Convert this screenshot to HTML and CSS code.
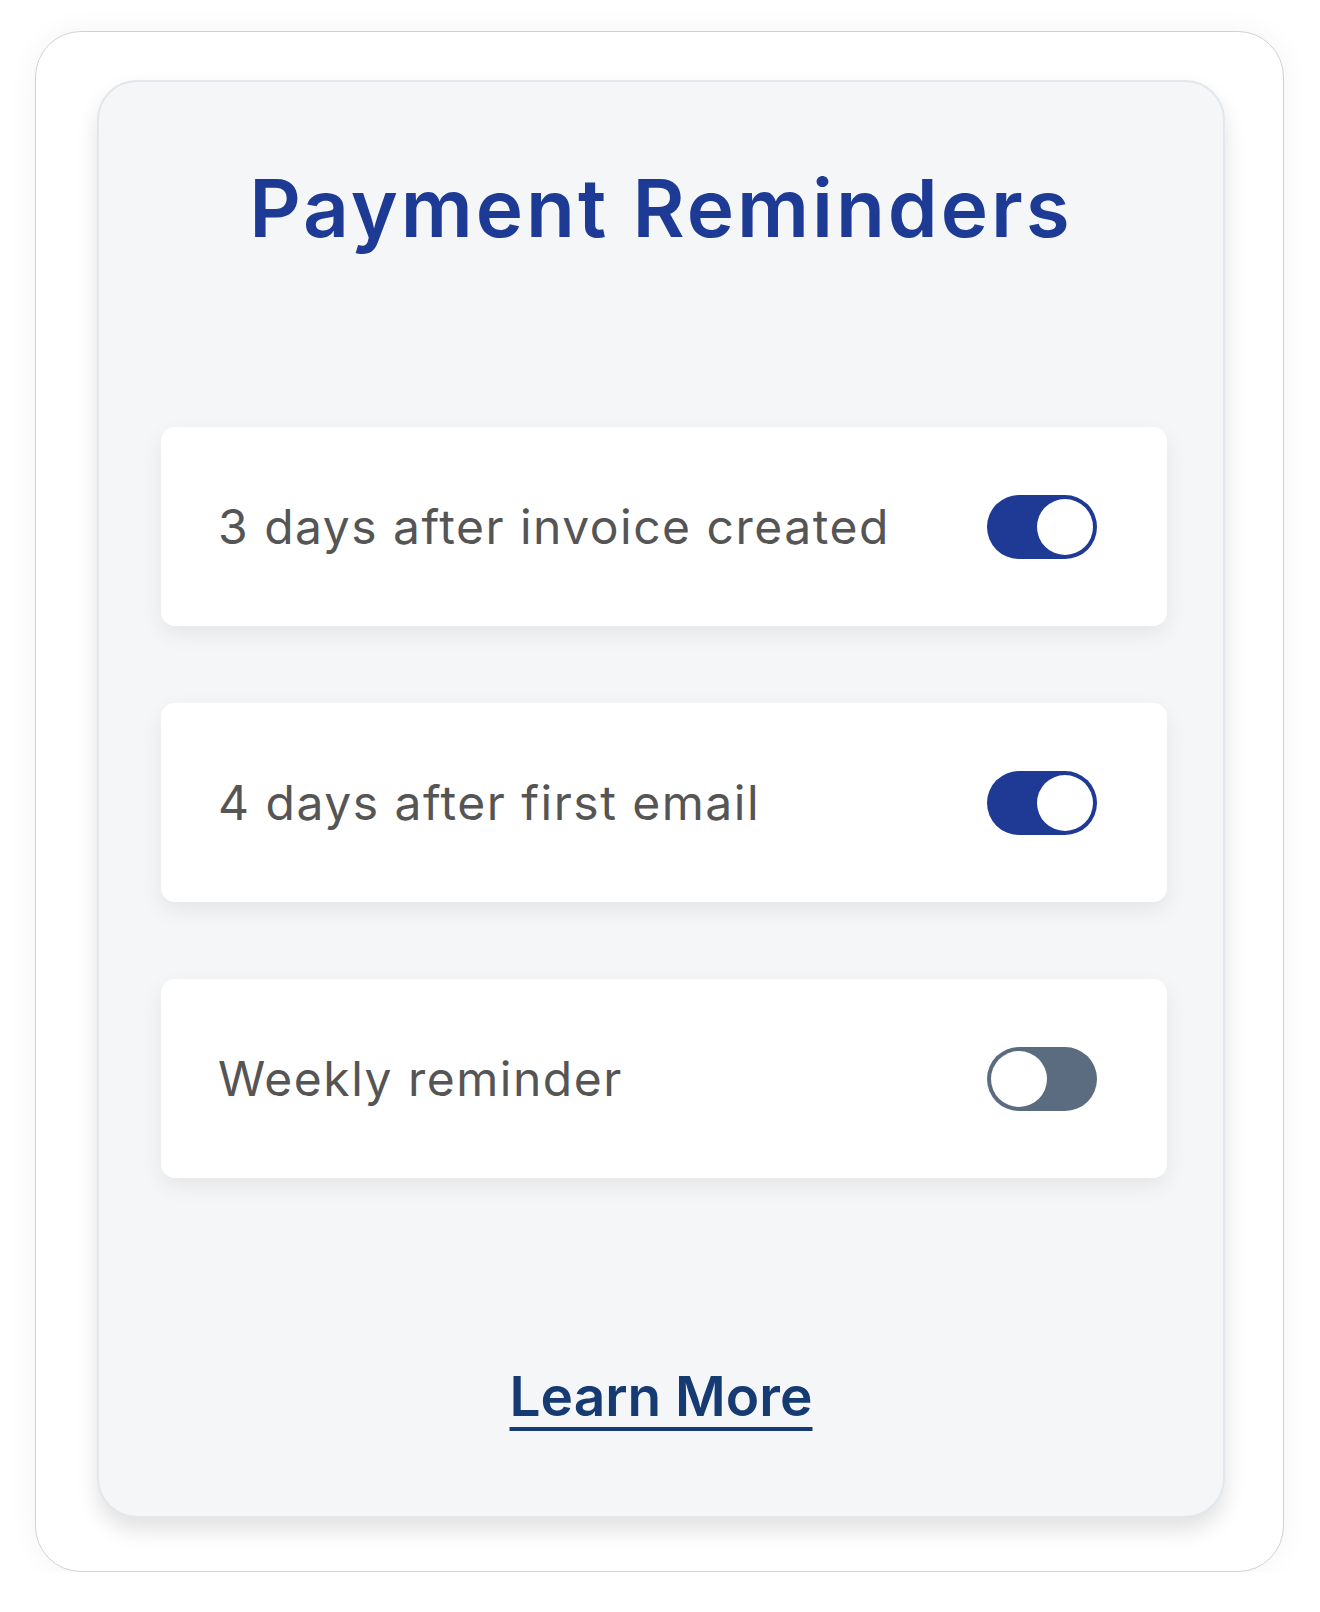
FILE: index.html
```html
<!DOCTYPE html>
<html lang="en">
<head>
    <meta charset="UTF-8">
    <meta name="viewport" content="width=device-width, initial-scale=1.0">
    <title>Payment Reminders</title>
    <link rel="stylesheet" href="styles.css">
</head>
<body>
    <div class="frame">
        <div class="card">
            <h1 class="card-title">Payment Reminders</h1>

            <!-- Reminder rows -->
            <div class="reminder-list">
                <div class="reminder">
                    <span class="reminder-label">3 days after invoice created</span>
                    <div class="toggle on"><div class="knob"></div></div>
                </div>
                <div class="reminder">
                    <span class="reminder-label">4 days after first email</span>
                    <div class="toggle on"><div class="knob"></div></div>
                </div>
                <div class="reminder">
                    <span class="reminder-label">Weekly reminder</span>
                    <div class="toggle off"><div class="knob"></div></div>
                </div>
            </div>

            <a class="learn-more" href="#">Learn More</a>
        </div>
    </div>
</body>
</html>
```

FILE: styles.css
```css
body {
    margin: 0;
    font-family: Inter, "Open Sans", sans-serif;
    background-color: #fff;
}

/* Outer frame */
.frame {
    margin: 31px 0 0 35px;
    width: 1249px;
    height: 1541px;
    box-sizing: border-box;
    border: 1px solid #d2d2d2;
    border-radius: 46px;
    background-color: #fff;
    box-shadow: 0 0 30px rgba(0, 0, 0, 0.05);
    padding: 48px 58px 0 61px;
}

/* Card */
.card {
    height: 1438px;
    box-sizing: border-box;
    background-color: #f5f6f8;
    border: 2px solid #e3e6ec;
    border-radius: 40px;
    box-shadow: 0 12px 22px rgba(0, 0, 0, 0.12);
    padding: 78px 59px 0 59px;
    display: flex;
    flex-direction: column;
    align-items: center;
}

.card-title {
    margin: 0;
    font-size: 80px;
    font-weight: 600;
    line-height: 1.2;
    color: #1d3a95;
    letter-spacing: 3px;
}

/* Reminder rows */
.reminder-list {
    align-self: stretch;
    margin: 171px -3px 0 3px;
    display: flex;
    flex-direction: column;
    gap: 77px;
}

.reminder {
    height: 199px;
    background-color: #fff;
    border-radius: 14px;
    box-shadow: 0 8px 22px rgba(0, 0, 0, 0.07);
    display: flex;
    align-items: center;
    justify-content: space-between;
    padding: 0 70px 0 57px;
}

.reminder-label {
    font-size: 48px;
    color: #555;
    letter-spacing: 1.5px;
}

/* Toggle */
.toggle {
    width: 110px;
    height: 64px;
    box-sizing: border-box;
    border-radius: 32px;
    padding: 4px;
    display: flex;
}

.toggle.on {
    background-color: #1e3a95;
    justify-content: flex-end;
}

.toggle.off {
    background-color: #5c6c80;
    justify-content: flex-start;
}

.knob {
    width: 56px;
    height: 56px;
    border-radius: 50%;
    background-color: #fff;
}

/* Link */
.learn-more {
    margin-top: 185px;
    font-size: 55px;
    font-weight: 600;
    line-height: 1.2;
    color: #163b72;
    text-decoration: underline;
    text-decoration-thickness: 4px;
    text-underline-offset: 11px;
}
```
